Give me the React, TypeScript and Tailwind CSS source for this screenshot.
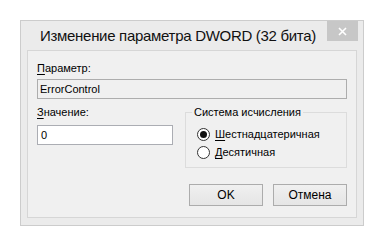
export default function App() {
    return (
        <div className="w-[385px] h-[246px] bg-white pt-[20px] pl-[20px] font-['Liberation_Sans',Arial,sans-serif] text-black">
            {/* Окно */}
            <div className="w-[344px] h-[206px] flex flex-col border border-[#cccccc] bg-[#ebebeb]">
                {/* Заголовок */}
                <div className="h-[29px] flex items-start">
                    <div className="flex-1 pl-[19px] pt-[6px] text-[15px] leading-[18px] tracking-[-0.3px] whitespace-nowrap text-[#111]">
                        Изменение параметра DWORD (32 бита)
                    </div>
                    <div className="w-[31px] h-[20px] mr-[5px] bg-[#c7c7c7] flex items-center justify-center">
                        <svg width="9" height="9" viewBox="0 0 9 9">
                            <path d="M1 1 L8 8 M8 1 L1 8" stroke="#fff" strokeWidth="1.6" />
                        </svg>
                    </div>
                </div>

                {/* Клиентская область */}
                <div className="flex-1 mx-[6px] mb-[7px] border border-[#d6d6d6] bg-[#f0f0f0] flex flex-col px-[9px] text-[11px]">
                    <div className="mt-[10px] leading-[15px]">
                        <u className="underline-offset-2">П</u>араметр:
                    </div>
                    <div className="mt-[3px] h-[20px] border border-[#adadad] bg-[#f0f0f0] pl-[2px] leading-[18px]">
                        ErrorControl
                    </div>

                    <div className="flex mt-[6px]">
                        <div className="w-[137px] flex flex-col">
                            <div className="leading-[15px]">
                                <u className="underline-offset-2">З</u>начение:
                            </div>
                            <div className="mt-[5px] h-[20px] border border-[#abadb3] bg-white pl-[3px] leading-[18px]">
                                0
                            </div>
                        </div>

                        <fieldset className="ml-[12px] w-[163px] h-[62px] mt-[1px] border border-[#dcdcdc] px-[11px]">
                            <legend className="ml-[-5px] px-[2px] leading-[13px]">Система исчисления</legend>
                            <div className="flex items-center h-[18px] mt-[6px]">
                                <span className="w-[13px] h-[13px] rounded-full border border-[#333] bg-white flex items-center justify-center">
                                    <span className="w-[7px] h-[7px] rounded-full bg-[#111]" />
                                </span>
                                <span className="ml-[5px]">
                                    <u className="underline-offset-2">Ш</u>естнадцатеричная
                                </span>
                            </div>
                            <div className="flex items-center h-[18px]">
                                <span className="w-[13px] h-[13px] rounded-full border border-[#333] bg-white" />
                                <span className="ml-[5px]">
                                    <u className="underline-offset-2">Д</u>есятичная
                                </span>
                            </div>
                        </fieldset>
                    </div>

                    <div className="flex justify-end gap-[10px] mt-[16px]">
                        <button className="w-[74px] h-[22px] border border-[#acacac] bg-linear-to-b from-[#f0f0f0] to-[#e5e5e5] text-[12px]">
                            OK
                        </button>
                        <button className="w-[74px] h-[22px] border border-[#acacac] bg-linear-to-b from-[#f0f0f0] to-[#e5e5e5] text-[12px]">
                            Отмена
                        </button>
                    </div>
                </div>
            </div>
        </div>
    );
}
